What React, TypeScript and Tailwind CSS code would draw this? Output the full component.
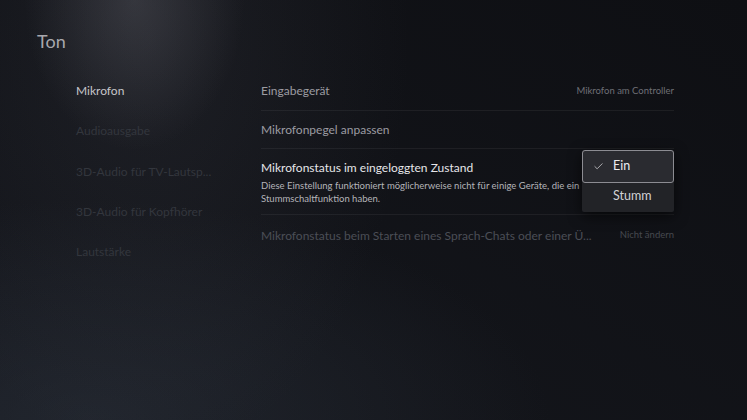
import { Check } from 'lucide-react'

const NAV = [
  { label: 'Mikrofon', active: true },
  { label: 'Audioausgabe' },
  { label: '3D-Audio für TV-Lautsp...' },
  { label: '3D-Audio für Kopfhörer' },
  { label: 'Lautstärke' },
]

export default function App() {
  return (
    <div
      className="relative w-[747px] h-[420px] overflow-hidden bg-[#101116] bg-[radial-gradient(ellipse_110px_150px_at_18%_0%,rgba(120,120,130,0.28),transparent_100%),radial-gradient(ellipse_260px_420px_at_20%_10%,rgba(70,72,82,0.22),transparent_100%),radial-gradient(ellipse_460px_220px_at_12%_100%,rgba(42,48,58,0.6),transparent_100%),linear-gradient(to_bottom_left,#0e0f13,#15171d)]"
      style={{ fontFamily: 'Lato, "Noto Sans", sans-serif' }}
    >
      {/* Header */}
      <div className="pt-[29px] pl-[37px] h-[71px] text-[18px] leading-6 text-[#a8a8ad]">Ton</div>

      <div className="flex">
        {/* Nav */}
        <nav className="w-[261px] pl-[76px]">
          {NAV.map(({ label, active }) => (
            <div key={label}
              className={`h-[40.3px] flex items-center text-[12px] ${active ? 'text-[#c6c6ca]' : 'text-[#33363d]'}`}>
              {label}
            </div>
          ))}
        </nav>

        {/* Settings */}
        <div className="w-[413px] pt-px">
          <div className="h-[39px] flex items-center justify-between border-b border-white/[0.06]">
            <span className="text-[12px] text-[#9c9ca2]">Eingabegerät</span>
            <span className="text-[9.5px] text-[#6e6f75]">Mikrofon am Controller</span>
          </div>
          <div className="h-[38px] flex items-center border-b border-white/[0.06]">
            <span className="text-[12px] text-[#9c9ca2]">Mikrofonpegel anpassen</span>
          </div>

          <div className="relative pt-[11px] pb-[9px] border-b border-white/[0.06]">
            <div className="text-[12px] leading-4 text-[#e6e6e9]">Mikrofonstatus im eingeloggten Zustand</div>
            <div className="mt-[3px] text-[9.5px] leading-[13px] text-[#b4b4b9] whitespace-nowrap">
              Diese Einstellung funktioniert möglicherweise nicht für einige Geräte, die ein
              <br />
              Stummschaltfunktion haben.
            </div>

            {/* Dropdown */}
            <div className="absolute right-0 top-px w-[92px] pb-[3px] rounded-[2px] bg-[#222327] shadow-[0_4px_14px_rgba(0,0,0,0.6)]">
              <div className="h-[33px] flex items-center rounded-[3px] border-[1.5px] border-[#8c8c92] bg-[#2a2b30]">
                <Check className="ml-[10px] w-[11px] h-[11px] text-[#d8d8dc]" strokeWidth={1.6} />
                <span className="ml-[9px] text-[12.5px] text-[#ededf0]">Ein</span>
              </div>
              <div className="h-[26px] flex items-center pl-[31px] text-[12.5px] text-[#d2d2d6]">Stumm</div>
            </div>
          </div>

          <div className="h-[41px] flex items-center justify-between">
            <span className="text-[12px] text-[#4b4e56]">Mikrofonstatus beim Starten eines Sprach-Chats oder einer Ü...</span>
            <span className="text-[9.5px] text-[#46494f]">Nicht ändern</span>
          </div>
        </div>
      </div>
    </div>
  )
}
